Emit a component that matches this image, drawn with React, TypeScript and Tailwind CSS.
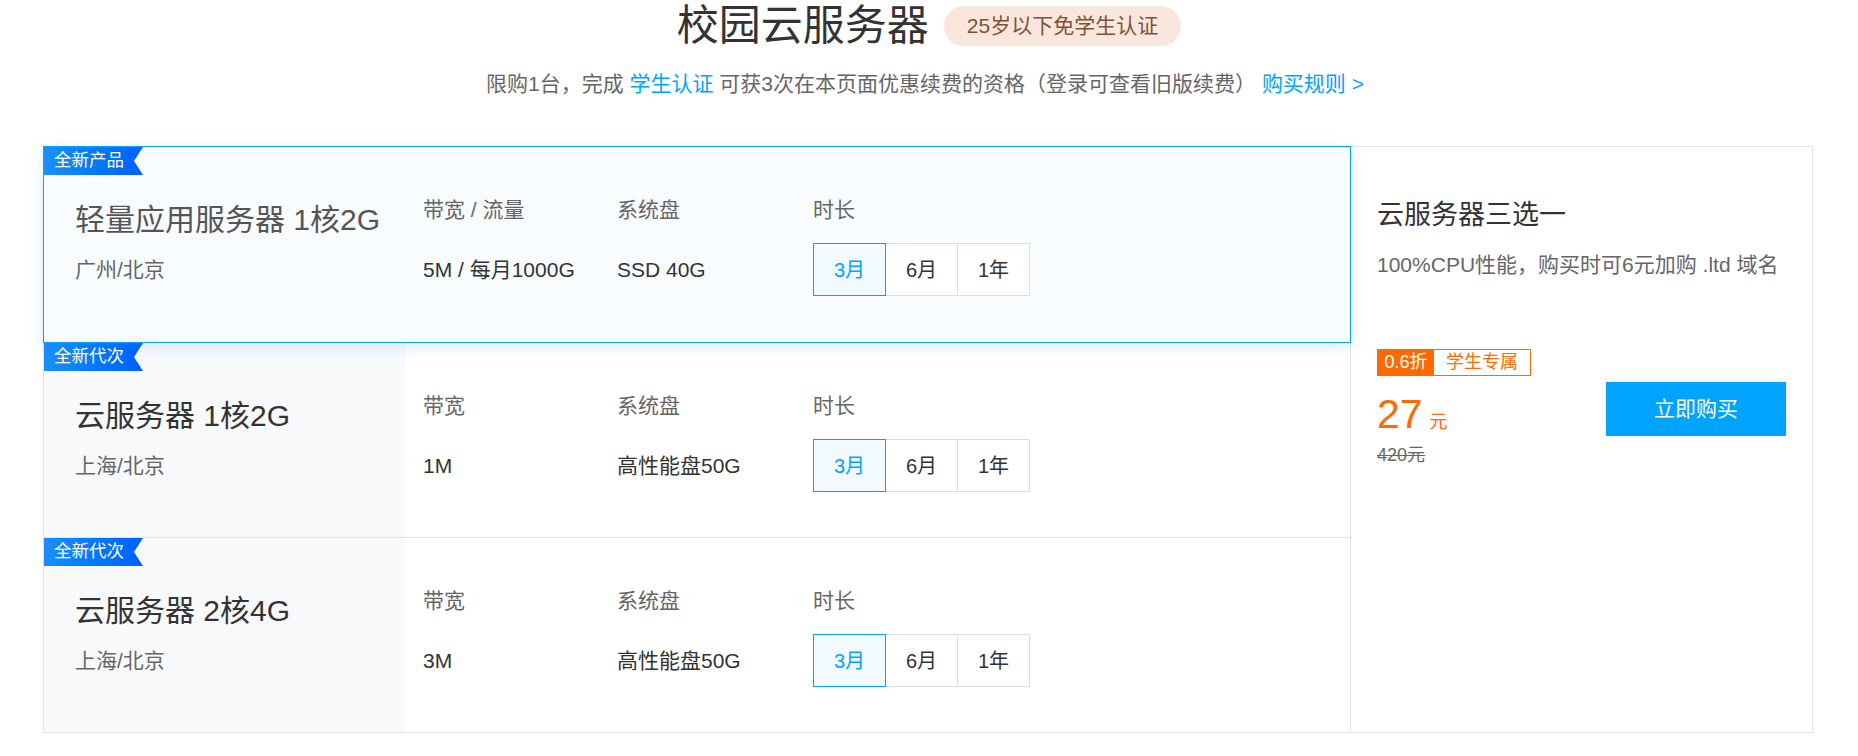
import clsx from 'clsx';

type Plan = {
  tag: string;
  title: string;
  region: string;
  bwLabel: string;
  bw: string;
  disk: string;
  active?: boolean;
};

const plans: Plan[] = [
  { tag: '全新产品', title: '轻量应用服务器 1核2G', region: '广州/北京', bwLabel: '带宽 / 流量', bw: '5M / 每月1000G', disk: 'SSD 40G', active: true },
  { tag: '全新代次', title: '云服务器 1核2G', region: '上海/北京', bwLabel: '带宽', bw: '1M', disk: '高性能盘50G' },
  { tag: '全新代次', title: '云服务器 2核4G', region: '上海/北京', bwLabel: '带宽', bw: '3M', disk: '高性能盘50G' },
];

const Tag = ({ text }: { text: string }) => (
  <div className="absolute left-0 top-0 z-10 flex h-[28px] w-[99px] items-center bg-gradient-to-r from-[#1a8ffa] to-[#0060ff] pl-[10px] text-[17.5px] leading-none text-white [clip-path:polygon(0_0,100%_0,calc(100%-9px)_50%,100%_100%,0_100%)]">
    {text}
  </div>
);

const Durations = () => (
  <div className="flex">
    {['3月', '6月', '1年'].map((d, i) => (
      <div
        key={d}
        className={clsx(
          'flex h-[53px] w-[73px] items-center justify-center border text-[20px]',
          i === 0 ? 'relative z-10 border-[#00a4ff] bg-[#f2f9ff] text-[#00a4ff]' : '-ml-px border-[#dddddd] bg-white text-[#333]'
        )}
      >
        {d}
      </div>
    ))}
  </div>
);

const Column = ({ label, children, w }: { label: string; children: React.ReactNode; w: string }) => (
  <div className={clsx('flex flex-col', w)}>
    <div className="text-[21px] leading-[28px] text-[#666]">{label}</div>
    <div className="mt-[19px] flex h-[53px] items-center text-[21px] text-[#333]">{children}</div>
  </div>
);

const Card = ({ plan, first }: { plan: Plan; first: boolean }) => (
  <div
    className={clsx(
      'relative flex border',
      first ? 'h-[197px]' : '-mt-px h-[196px]',
      plan.active ? 'z-10 border-[#00a4ff] bg-[#f9fcff] shadow-[0_4px_16px_rgba(0,110,255,0.13)]' : 'border-[#e3e3e3] bg-white'
    )}
  >
    <Tag text={plan.tag} />
    <div className={clsx('w-[361px] shrink-0 pl-[31px] pt-[55px]', !plan.active && 'bg-[#f8f9fb]')}>
      <div className={clsx('text-[30px] leading-[36px]', plan.active ? 'text-[#555]' : 'text-[#333]')}>{plan.title}</div>
      <div className="mt-[18px] text-[21px] leading-[28px] text-[#666]">{plan.region}</div>
    </div>
    <div className="flex pl-[18px] pt-[49px]">
      <Column label={plan.bwLabel} w="w-[194px]">{plan.bw}</Column>
      <Column label="系统盘" w="w-[196px]">{plan.disk}</Column>
      <div className="flex flex-col">
        <div className="text-[21px] leading-[28px] text-[#666]">时长</div>
        <div className="mt-[19px]">
          <Durations />
        </div>
      </div>
    </div>
  </div>
);

export default function App() {
  return (
    <div className="min-h-screen w-full bg-white font-['Liberation_Sans','Noto_Sans_CJK_SC',sans-serif]">
      <div className="flex items-center justify-center pt-[2px]">
        <h1 className="text-[42px] leading-[48px] font-normal text-[#333]">校园云服务器</h1>
        <span className="ml-[15px] flex h-[40px] items-center rounded-full bg-[#f9e7dd] px-[23px] text-[21px] text-[#7f5238]">
          25岁以下免学生认证
        </span>
      </div>
      <p className="mt-[20px] pr-[8px] text-center text-[21px] leading-[28px] text-[#666]">
        限购1台，完成 <span className="text-[#00a4ff]">学生认证</span> 可获3次在本页面优惠续费的资格（登录可查看旧版续费） <span className="text-[#00a4ff]">购买规则 &gt;</span>
      </p>

      <div className="ml-[43px] mt-[48px] flex w-[1770px]">
        <div className="flex w-[1308px] shrink-0 flex-col">
          {plans.map((p, i) => (
            <Card key={p.title} plan={p} first={i === 0} />
          ))}
        </div>
        <div className="-ml-px flex w-[463px] flex-col border border-[#e3e3e3] pl-[26px] pr-[26px] pt-[50px]">
          <div className="text-[27px] leading-[36px] text-[#333]">云服务器三选一</div>
          <div className="mt-[18px] text-[21px] leading-[28px] text-[#666]">100%CPU性能，购买时可6元加购 .ltd 域名</div>
          <div className="mt-[70px] flex items-start justify-between">
            <div className="flex flex-col">
              <div className="flex h-[27px] w-[154px] border border-[#ff6a00] text-[18px]">
                <span className="flex w-[56px] items-center justify-center bg-[#ff6a00] text-white">0.6折</span>
                <span className="flex flex-1 items-center justify-center text-[#ff6a00]">学生专属</span>
              </div>
              <div className="mt-[14px] flex items-baseline text-[#ff6a00]">
                <span className="text-[41px] leading-[48px]">27</span>
                <span className="ml-[7px] text-[18px]">元</span>
              </div>
              <div className="mt-[5px] text-[18px] leading-[24px] text-[#666] line-through">420元</div>
            </div>
            <button className="mt-[33px] h-[54px] w-[180px] bg-[#00a4ff] text-[21px] text-white">立即购买</button>
          </div>
        </div>
      </div>
    </div>
  );
}
